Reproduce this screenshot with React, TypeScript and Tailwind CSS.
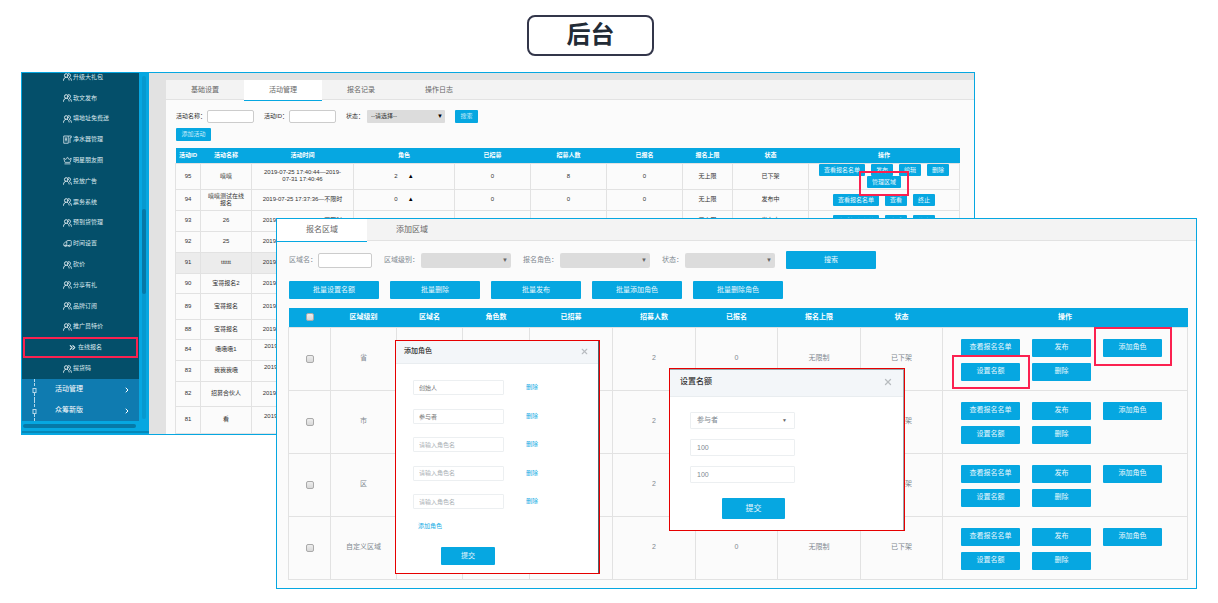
import { useState } from "react";
import type { ReactNode } from "react";
import { ChevronRight, ChevronsRight, Crown, Truck, X } from "lucide-react";
import clsx from "clsx";

type MenuItem = { label: string; icon: "team" | "device" | "crown" | "truck" | "active" };

const menuItems: MenuItem[] = [
  { label: "升级大礼包", icon: "team" },
  { label: "软文发布", icon: "team" },
  { label: "填地址免费送", icon: "team" },
  { label: "净水器管理", icon: "device" },
  { label: "明星朋友圈", icon: "crown" },
  { label: "投放广告", icon: "team" },
  { label: "票务系统", icon: "team" },
  { label: "预到货管理", icon: "team" },
  { label: "时间设置", icon: "truck" },
  { label: "砍价", icon: "team" },
  { label: "分享有礼", icon: "team" },
  { label: "品牌订阅", icon: "team" },
  { label: "推广员特价", icon: "team" },
  { label: "在线报名", icon: "active" },
  { label: "提货码", icon: "team" },
];

const published = ["查看报名名单", "查看", "终止"];
const draft = ["查看报名名单", "发布", "编辑", "删除", "管理区域"];

const activities = [
  { id: 95, name: "嘻嘻", time: "2019-07-25 17:40:44—2019-07-31 17:40:46", roles: 2, quota: 8, status: "已下架", actions: draft, height: "h-[26px]" },
  { id: 94, name: "嘻嘻测试在线报名", time: "2019-07-25 17:37:36—不限时", roles: 0, quota: 0, status: "发布中", actions: published, height: "h-[21px]" },
  { id: 93, name: "26", time: "2019-07-25 17:30:12—不限时", roles: 0, quota: 0, status: "发布中", actions: published, height: "h-[21px]" },
  { id: 92, name: "25", time: "2019-07-25 17:21:08—不限时", roles: 0, quota: 0, status: "发布中", actions: published, height: "h-[21px]" },
  { id: 91, name: "tttttt", time: "2019-07-25 16:58:40—不限时", roles: 0, quota: 0, status: "发布中", actions: published, height: "h-[21px]" },
  { id: 90, name: "宝哥报名2", time: "2019-07-25 16:20:31—不限时", roles: 0, quota: 0, status: "发布中", actions: published, height: "h-[20px]" },
  { id: 89, name: "宝哥报名", time: "2019-07-25 15:47:22—不限时", roles: 0, quota: 0, status: "发布中", actions: published, height: "h-[26px]" },
  { id: 88, name: "宝哥报名", time: "2019-07-25 15:40:10—不限时", roles: 0, quota: 0, status: "发布中", actions: published, height: "h-[20px]" },
  { id: 84, name: "哦哦哦1", time: "2019-07-24 11:20:44—2019-07-31 17:40:46", roles: 0, quota: 0, status: "发布中", actions: published, height: "h-[21px]" },
  { id: 83, name: "我我我哦", time: "2019-07-24 10:12:30—2019-07-31 17:40:46", roles: 0, quota: 0, status: "发布中", actions: published, height: "h-[21px]" },
  { id: 82, name: "招募合伙人", time: "2019-07-23 17:40:44—不限时", roles: 0, quota: 0, status: "发布中", actions: published, height: "h-[25px]" },
  { id: 81, name: "看", time: "2019-07-23 14:05:18—2019-07-31 17:40:46", roles: 0, quota: 0, status: "发布中", actions: published, height: "h-[27px]" },
];

const regions = ["省", "市", "区", "自定义区域"];

function TeamIcon() {
  return (
    <svg viewBox="0 0 18 16" className="h-[8px] w-[9px]" fill="none" stroke="currentColor" strokeWidth="2" strokeLinecap="round">
      <circle cx="6.5" cy="5" r="3.6" />
      <path d="M1 14.5c0-3.5 2.4-5.6 5-5.9" />
      <path d="M10.5 1.6c2.6-.6 4.6 1 4.6 3.4 0 1.700-1 2.800-2.300 3.300" />
      <path d="M9 9c2 .8 3 2.600 3.200 5M13.500 9.200c1.800.8 2.900 2.400 3.300 5.300" />
    </svg>
  );
}

function DeviceIcon() {
  return (
    <svg viewBox="0 0 18 18" className="h-[9px] w-[9px]" fill="none" stroke="currentColor" strokeWidth="1.6">
      <path d="M1.500 2h9v14.500h-9zM4 6h4M4 9.500h4M6 6v7M10.500 2h6v3.500h-2.500V16" />
    </svg>
  );
}

function MenuIcon({ icon }: { icon: MenuItem["icon"] }) {
  if (icon === "device") return <DeviceIcon />;
  if (icon === "crown") return <Crown className="h-[9px] w-[9px]" />;
  if (icon === "truck") return <Truck className="h-[9px] w-[9px] -scale-x-100" />;
  if (icon === "active") return <ChevronsRight className="h-[9px] w-[9px]" strokeWidth={3} />;
  return <TeamIcon />;
}

function Highlight({ className }: { className: string }) {
  return <span className={clsx("pointer-events-none absolute z-10 border-2 border-[#fb2150]", className)} />;
}

function Sidebar() {
  return (
    <aside className="flex w-[127px] shrink-0 flex-col bg-[#06a7e1] text-white">
      <div className="flex">
        <nav className="w-[117px] overflow-hidden">
          <div className="bg-[#044f6a]">
            <ul className="-mt-[6px] flex h-[312px] flex-col">
              {menuItems.map((item) => (
                <li key={item.label} className="relative flex flex-1">
                  <a
                    href="#"
                    className={clsx(
                      "flex flex-1 items-center gap-px text-[6px] text-[#dce9ee]",
                      item.icon === "active" ? "pl-[46px]" : "pl-[41px]",
                    )}
                  >
                    <MenuIcon icon={item.icon} />
                    {item.label}
                  </a>
                  {item.icon === "active" && <Highlight className="inset-x-px inset-y-0" />}
                </li>
              ))}
            </ul>
          </div>
          <ul className="bg-[#0f7bb0]">
            {["活动管理", "众筹新版"].map((label) => (
              <li key={label}>
                <a href="#" className="flex h-[21px] items-center pr-2 text-[7px]">
                  <svg viewBox="0 0 8 21" className="ml-[8px] h-[21px] w-[8px]" fill="none" stroke="#b5d8ea">
                    <path d="M4.500 0v8M4.500 14v7" strokeDasharray="3 1" />
                    <rect x="3" y="9.500" width="3" height="4" />
                  </svg>
                  <span className="ml-[17px] flex-1">{label}</span>
                  <ChevronRight className="h-[8px] w-[8px]" strokeWidth={3} />
                </a>
              </li>
            ))}
          </ul>
        </nav>
        <div className="ml-[3px] mt-[3px] mb-[2px] w-[4px] rounded-full bg-[#0699cf] pt-[133px]">
          <div className="h-[85px] rounded-full bg-[#0679a8]" />
        </div>
      </div>
      <div className="mt-[3px] ml-px h-[4px] w-[113px] rounded-full bg-[#0679a8]" />
      <div className="mt-[3px] h-[2px] bg-[#0688b8]" />
    </aside>
  );
}

function SmallButton({ children }: { children: ReactNode }) {
  return (
    <button type="button" className="h-[12px] rounded-[1px] bg-[#06a7e1] px-[5px] text-[6px] leading-[12px] text-[#e8f7fd]">
      {children}
    </button>
  );
}

function ActivityPage() {
  const [tab, setTab] = useState("活动管理");

  return (
    <section className="min-w-0 flex-1 bg-[#e2e2e2] pt-[7px] pl-[17px]">
      <div className="h-full bg-[#fbfbfb]">
        <div className="flex h-[20px] border-b border-[#e2e2e2] bg-[#f3f3f3]">
          {["基础设置", "活动管理", "报名记录", "操作日志"].map((name) => (
            <button
              key={name}
              type="button"
              onClick={() => setTab(name)}
              className={clsx(
                "h-[21px] w-[78px] border-b text-[7px] text-[#666]",
                tab === name ? "border-[#06a7e1] bg-white" : "border-transparent",
              )}
            >
              {name}
            </button>
          ))}
        </div>

        <div className="pt-[10px] pr-[14px] pl-[9px]">
          <form className="flex items-center pl-px text-[6px] text-[#333]">
            <label htmlFor="activity-name" className="w-[31px]">活动名称：</label>
            <input id="activity-name" className="h-[13px] w-[47px] rounded-[2px] border border-[#ccc] bg-white" />
            <label htmlFor="activity-id" className="ml-[10px] w-[25px] whitespace-nowrap">活动ID：</label>
            <input id="activity-id" className="h-[13px] w-[47px] rounded-[2px] border border-[#ccc] bg-white" />
            <label htmlFor="activity-status" className="ml-[10px] w-[21px]">状态：</label>
            <span className="relative flex">
              <select id="activity-status" className="h-[13px] w-[78px] appearance-none rounded-[1px] bg-[#dcdcdc] px-[4px] text-[#333]">
                <option>--请选择--</option>
              </select>
              <span className="pointer-events-none absolute top-[3px] right-[2px] text-[6px] leading-[6px] text-black">▼</span>
            </span>
            <button type="button" className="ml-[10px] h-[13px] w-[23px] rounded-[1px] bg-[#06a7e1] text-[#c9edfa]">搜索</button>
          </form>
          <button type="button" className="mt-[5px] ml-px block h-[13px] w-[35px] rounded-[1px] bg-[#06a7e1] text-[6px] text-[#c9edfa]">
            添加活动
          </button>

          <table className="mt-[7px] w-full table-fixed border-collapse text-center text-[6px] leading-[7px] text-[#333]">
            <colgroup>
              <col className="w-[25px]" />
              <col className="w-[51px]" />
              <col className="w-[102px]" />
              <col className="w-[101px]" />
              <col className="w-[76px]" />
              <col className="w-[76px]" />
              <col className="w-[76px]" />
              <col className="w-[50px]" />
              <col className="w-[76px]" />
              <col />
            </colgroup>
            <thead className="bg-[#06a7e1] text-white">
              <tr className="h-[15px]">
                {["活动ID", "活动名称", "活动时间", "角色", "已招募", "招募人数", "已报名", "报名上限", "状态", "操作"].map((h) => (
                  <th key={h} className="whitespace-nowrap p-0">{h}</th>
                ))}
              </tr>
            </thead>
            <tbody>
              {activities.map((a) => (
                <tr
                  key={a.id}
                  className={clsx(a.height, "[&>td]:border [&>td]:border-[#e2e2e2] [&>td]:p-0", a.id === 91 && "bg-[#ececec]")}
                >
                  <td>{a.id}</td>
                  <td><div className="px-[6px]">{a.name}</div></td>
                  <td><div className="px-[8px]">{a.time}</div></td>
                  <td>
                    <div className="flex items-center justify-center gap-[10px]">
                      {a.roles}
                      <span className="text-black">▲</span>
                    </div>
                  </td>
                  <td>0</td>
                  <td>{a.quota}</td>
                  <td>0</td>
                  <td>无上限</td>
                  <td>{a.status}</td>
                  <td>
                    <div className="relative flex flex-wrap justify-center gap-x-[6px]">
                      {a.actions.map((action) => (
                        <SmallButton key={action}>{action}</SmallButton>
                      ))}
                      {a.id === 95 && <Highlight className="top-[7px] left-[50px] h-[25px] w-[50px]" />}
                    </div>
                  </td>
                </tr>
              ))}
            </tbody>
          </table>
        </div>
      </div>
    </section>
  );
}

function FilterSelect({ id, label, labelWidth }: { id: string; label: string; labelWidth: string }) {
  return (
    <div className="ml-[12px] flex items-center">
      <label htmlFor={id} className={clsx("whitespace-nowrap", labelWidth)}>{label}：</label>
      <span className="relative flex">
        <select id={id} className="h-[15px] w-[90px] appearance-none rounded-[2px] bg-[#dcdcdc]" />
        <span className="pointer-events-none absolute top-[4px] right-[3px] text-[6px] leading-[7px] text-[#666]">▼</span>
      </span>
    </div>
  );
}

function BlueButton({ children, className }: { children: ReactNode; className: string }) {
  return (
    <button type="button" className={clsx("rounded-[1px] bg-[#06a7e1] text-[#e8f7fd]", className)}>
      {children}
    </button>
  );
}

const checkboxStyle =
  "mx-auto block h-[8px] w-[8px] appearance-none rounded-[2px] border border-[#aaa] bg-linear-to-b from-[#eee] to-[#d8d8d8]";

function RegionWindow() {
  const [tab, setTab] = useState("报名区域");

  return (
    <section className="absolute top-[218px] right-[21px] left-[276px] border border-[#06a7e1] bg-[#fbfbfb] pb-[8px] text-[7px] text-[#808890]">
      <div className="flex h-[22px] border-b border-[#e2e2e2] bg-[#f3f3f3]">
        {["报名区域", "添加区域"].map((name) => (
          <button
            key={name}
            type="button"
            onClick={() => setTab(name)}
            className={clsx(
              "h-[23px] w-[90px] border-b text-[8px] text-[#666]",
              tab === name ? "border-[#06a7e1] bg-white" : "border-transparent",
            )}
          >
            {name}
          </button>
        ))}
      </div>

      <form className="flex items-center pt-[10px] pl-[12px]">
        <label htmlFor="region-name" className="w-[29px] whitespace-nowrap">区域名：</label>
        <input id="region-name" className="h-[15px] w-[54px] rounded-[2px] border border-[#ccc] bg-white" />
        <FilterSelect id="region-level" label="区域级别" labelWidth="w-[37px]" />
        <FilterSelect id="region-role" label="报名角色" labelWidth="w-[37px]" />
        <FilterSelect id="region-status" label="状态" labelWidth="w-[23px]" />
        <BlueButton className="ml-[11px] h-[18px] w-[90px]">搜索</BlueButton>
      </form>

      <div className="mt-[12px] flex gap-[11px] pl-[12px]">
        {["批量设置名额", "批量删除", "批量发布", "批量添加角色", "批量删除角色"].map((name) => (
          <BlueButton key={name} className="h-[18px] w-[90px]">{name}</BlueButton>
        ))}
      </div>

      <div className="mt-[9px] pr-[8px] pl-[11px]">
        <table className="w-full table-fixed border-collapse text-center">
          <colgroup>
            <col className="w-[42px]" />
            <col className="w-[66px]" />
            <col className="w-[66px]" />
            <col className="w-[67px]" />
            <col className="w-[83px]" />
            <col className="w-[83px]" />
            <col className="w-[82px]" />
            <col className="w-[83px]" />
            <col className="w-[82px]" />
            <col />
          </colgroup>
          <thead className="bg-[#06a7e1] text-white">
            <tr className="h-[19px]">
              <th className="p-0">
                <input type="checkbox" aria-label="全选" className={checkboxStyle} />
              </th>
              {["区域级别", "区域名", "角色数", "已招募", "招募人数", "已报名", "报名上限", "状态", "操作"].map((h) => (
                <th key={h} className="p-0">{h}</th>
              ))}
            </tr>
          </thead>
          <tbody>
            {regions.map((region, i) => (
              <tr key={region} className="h-[63px] [&>td]:border [&>td]:border-[#e2e2e2] [&>td]:p-0">
                <td>
                  <input type="checkbox" aria-label={region} className={checkboxStyle} />
                </td>
                <td>{region}</td>
                <td></td>
                <td></td>
                <td></td>
                <td>2</td>
                <td>{i === 0 || i === 3 ? 0 : ""}</td>
                <td>{i === 0 || i === 3 ? "无限制" : ""}</td>
                <td>已下架</td>
                <td>
                  <div className="flex flex-wrap gap-x-[12px] gap-y-[6px] pt-[2px] pl-[18px]">
                    {["查看报名名单", "发布", "添加角色", "设置名额", "删除"].map((action) => (
                      <span key={action} className="relative flex">
                        <BlueButton className="h-[18px] w-[59px]">{action}</BlueButton>
                        {i === 0 && action === "添加角色" && <Highlight className="-top-[12px] -right-[10px] -bottom-[9px] -left-[9px]" />}
                        {i === 0 && action === "设置名额" && <Highlight className="-top-[8px] -right-[10px] -bottom-[8px] -left-[9px]" />}
                      </span>
                    ))}
                  </div>
                </td>
              </tr>
            ))}
          </tbody>
        </table>
      </div>

      <AddRoleDialog />
      <QuotaDialog />
    </section>
  );
}

function AddRoleDialog() {
  return (
    <div role="dialog" aria-label="添加角色" className="absolute top-[121px] left-[118px] h-[234px] w-[205px] border border-[#e60000] bg-white">
      <div className="h-full border-r border-[#50656e]">
        <header className="flex h-[23px] items-center justify-between border-b border-[#e9edf0] bg-[#f3f6f9] pr-[9px] pb-[2px] pl-[8px] text-[#333]">
          <h2 className="text-[7px] font-medium">添加角色</h2>
          <button type="button" aria-label="关闭" className="text-[#b8bcc0]"><X className="h-[9px] w-[9px]" strokeWidth={3} /></button>
        </header>
        <div className="flex flex-col items-start pt-[16px] pl-[17px] text-[6px]">
          <div className="flex h-[129px] flex-col justify-between">
            {["创始人", "参与者", "", "", ""].map((role, i) => (
              <div key={i} className="flex items-center gap-[22px]">
                <input
                  aria-label="角色名"
                  placeholder="请输入角色名"
                  defaultValue={role}
                  className="h-[15px] w-[91px] rounded-[1px] border border-[#eceff1] px-[5px] text-[#777] placeholder:text-[#aab0b5]"
                />
                <a href="#" className="text-[#1aaee5]">删除</a>
              </div>
            ))}
          </div>
          <a href="#" className="mt-[13px] ml-[5px] leading-[9px] text-[#1aaee5]">添加角色</a>
          <BlueButton className="mt-[16px] ml-[28px] h-[18px] w-[54px] text-[7px]">提交</BlueButton>
        </div>
      </div>
    </div>
  );
}

function QuotaDialog() {
  const field = "h-[17px] w-[105px] rounded-[1px] border border-[#eceff1] bg-white px-[6px] text-[#808890]";

  return (
    <div role="dialog" aria-label="设置名额" className="absolute top-[149px] left-[392px] h-[163px] w-[236px] border border-[#e60000] bg-white">
      <div className="h-full border-t border-r border-[#9aa5aa]">
        <header className="flex h-[27px] items-center justify-between border-b border-[#e9edf0] bg-[#f3f6f9] pr-[10px] pb-[2px] pl-[10px] text-[#333]">
          <h2 className="text-[8px] font-medium">设置名额</h2>
          <button type="button" aria-label="关闭" className="text-[#b8bcc0]"><X className="h-[10px] w-[10px]" strokeWidth={3} /></button>
        </header>
        <div className="flex flex-col items-start gap-[10px] pt-[15px] pl-[20px]">
          <span className="relative flex">
            <select aria-label="角色" className={clsx(field, "appearance-none")}>
              <option>参与者</option>
            </select>
            <span className="pointer-events-none absolute top-[5px] right-[8px] text-[5px] leading-[7px] text-[#666]">▼</span>
          </span>
          <input aria-label="招募人数" defaultValue="100" className={field} />
          <input aria-label="报名上限" defaultValue="100" className={field} />
          <BlueButton className="mt-[5px] ml-[32px] h-[21px] w-[63px] text-[8px]">提交</BlueButton>
        </div>
      </div>
    </div>
  );
}

export default function App() {
  return (
    <main
      lang="zh-CN"
      className="relative min-h-screen bg-white pt-[15px] font-['Liberation_Sans','Noto_Sans_CJK_SC',sans-serif]"
    >
      <div className="flex justify-center pr-[37px]">
        <h1 className="flex h-[41px] w-[127px] items-center justify-center rounded-[8px] border-2 border-[#33364a] pb-[2px] text-[24px] font-bold text-[#222b36]">
          后台
        </h1>
      </div>
      <div className="mt-[16px] mr-[243px] ml-[21px] flex border border-[#06a7e1]">
        <Sidebar />
        <ActivityPage />
      </div>
      <RegionWindow />
    </main>
  );
}
